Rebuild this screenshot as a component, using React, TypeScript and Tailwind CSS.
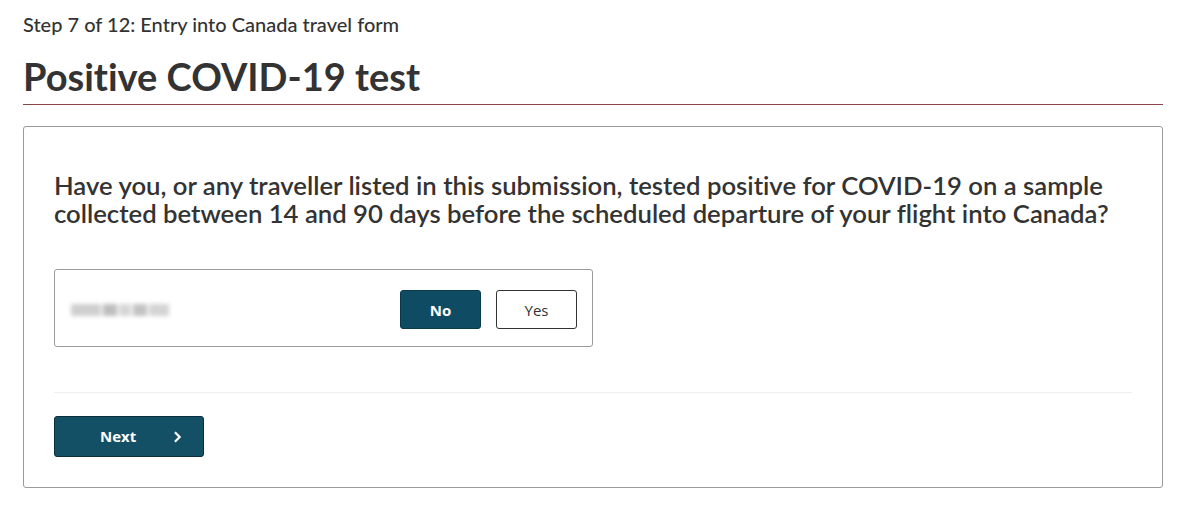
import { useState } from "react";

const heading = "font-['Lato','Liberation_Sans',sans-serif] [font-variant-ligatures:none]";
const btnFont = "font-['Open_Sans','DejaVu_Sans',sans-serif]";

export default function App() {
  const [answer, setAnswer] = useState<"no" | "yes">("no");

  return (
    <div className="min-h-[506px] bg-white pl-[23px] pr-[21px] text-[#333]">
      <p className={`${heading} pt-[12px] text-[20px] leading-[24px] font-medium`}>
        Step 7 of 12: Entry into Canada travel form
      </p>
      <h1
        className={`${heading} mt-[17px] border-b border-[#8c4549] pb-[5px] text-[38px] leading-[46px] font-bold`}
      >
        Positive COVID-19 test
      </h1>

      <section className="mt-[21px] rounded-[3px] border border-[#9a9a9a] px-[30px] pt-[44px] pb-[30px]">
        <h2 className={`${heading} text-[25.7px] leading-[28px] font-semibold`}>
          Have you, or any traveller listed in this submission, tested positive for COVID-19 on a sample
          collected between 14 and 90 days before the scheduled departure of your flight into Canada?
        </h2>

        <div className="mt-[42px] flex w-[539px] items-center justify-between rounded-[3px] border border-[#9a9a9a] pt-[20px] pr-[15px] pb-[17px] pl-[16px]">
          <span className="flex h-[17px] items-center gap-[2px] blur-[2px]">
            <span className="h-[12px] w-[30px] bg-[#cfcfcf]" />
            <span className="h-[12px] w-[14px] bg-[#bdbdbd]" />
            <span className="h-[12px] w-[12px] bg-[#d6d6d6]" />
            <span className="h-[12px] w-[14px] bg-[#c2c2c2]" />
            <span className="h-[12px] w-[20px] bg-[#d4d4d4]" />
          </span>
          <div className={`${btnFont} flex gap-[15px] text-[15px]`}>
            <button
              type="button"
              onClick={() => setAnswer("no")}
              className={`h-[39px] w-[81px] rounded-[3px] border pt-[2px] ${
                answer === "no"
                  ? "border-[#0c3a4b] bg-[#0f4c63] font-bold text-white"
                  : "border-[#333] bg-white text-[#333]"
              }`}
            >
              No
            </button>
            <button
              type="button"
              onClick={() => setAnswer("yes")}
              className={`h-[39px] w-[81px] rounded-[3px] border pt-[2px] ${
                answer === "yes"
                  ? "border-[#0c3a4b] bg-[#0f4c63] font-bold text-white"
                  : "border-[#333] bg-white text-[#333]"
              }`}
            >
              Yes
            </button>
          </div>
        </div>

        <div className="mt-[45px] border-t border-[#eeeeee]" />

        <button
          type="button"
          className={`${btnFont} mt-[23px] flex h-[41px] w-[150px] items-center rounded-[3px] border border-[#0a2e3b] bg-[#135066] text-[15px] font-bold text-white`}
        >
          <span className="ml-[45px]">Next</span>
          <svg viewBox="0 0 10 14" className="ml-[37px] h-[12px] w-[9px]" fill="none">
            <path d="M2 1.5 L7.5 7 L2 12.5" stroke="currentColor" strokeWidth="2.6" />
          </svg>
        </button>
      </section>
    </div>
  );
}
